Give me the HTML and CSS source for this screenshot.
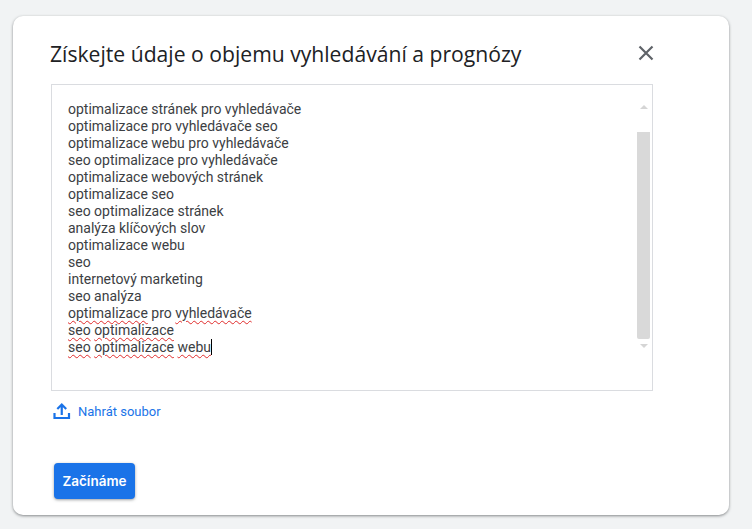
FILE: index.html
```html
<!DOCTYPE html>
<html lang="cs">
<head>
    <meta charset="UTF-8">
    <meta name="viewport" content="width=device-width, initial-scale=1.0">
    <title>Plánovač klíčových slov</title>
    <link rel="stylesheet" href="styles.css">
</head>
<body>
    <div class="dialog">
        <div class="dialog-header">
            <h1>Získejte údaje o objemu vyhledávání a prognózy</h1>
            <svg class="close-icon" width="16" height="16" viewBox="0 0 16 16">
                <path d="M1.5 1.500L14.500 14.500M14.500 1.500L1.500 14.500" stroke="#5f6368" stroke-width="2.200" fill="none"/>
            </svg>
        </div>
        <div class="keyword-box">
            <p>optimalizace stránek pro vyhledávače</p>
            <p>optimalizace pro vyhledávače seo</p>
            <p>optimalizace webu pro vyhledávače</p>
            <p>seo optimalizace pro vyhledávače</p>
            <p>optimalizace webových stránek</p>
            <p>optimalizace seo</p>
            <p>seo optimalizace stránek</p>
            <p>analýza klíčových slov</p>
            <p>optimalizace webu</p>
            <p>seo</p>
            <p>internetový marketing</p>
            <p>seo analýza</p>
            <p><span class="misspelled">optimalizace</span> pro <span class="misspelled">vyhledávače</span></p>
            <p><span class="misspelled">seo</span> <span class="misspelled">optimalizace</span></p>
            <p><span class="misspelled">seo</span> <span class="misspelled">optimalizace</span> <span class="misspelled caret">webu</span></p>
            <div class="scrollbar">
                <span class="arrow-up"></span>
                <span class="thumb"></span>
                <span class="arrow-down"></span>
            </div>
        </div>
        <div class="upload">
            <svg width="18" height="18" viewBox="0 0 18 18">
                <path d="M1.500 11v5h14.500v-5M8.750 13V2.500M4.300 7L8.750 2.500 13.200 7" stroke="#1a73e8" stroke-width="2.200" fill="none"/>
            </svg>
            <span>Nahrát soubor</span>
        </div>
        <button class="start-button">Začínáme</button>
    </div>
</body>
</html>
```

FILE: styles.css
```css
body {
    font-family: Roboto, Arial, sans-serif;
    margin: 0;
    padding: 16px 23px 14px 13px;
    background-color: #f1f3f4;
    color: #3c4043;
}
.dialog {
    height: 499px;
    box-sizing: border-box;
    padding: 23px 38px 16px 38px;
    background-color: #ffffff;
    border-radius: 10px;
    box-shadow: 0 1px 3px rgba(60, 64, 67, 0.6);
    display: flex;
    flex-direction: column;
    align-items: flex-start;
}
.dialog-header {
    width: 100%;
    display: flex;
    justify-content: space-between;
    align-items: flex-start;
    height: 45px;
}
.dialog-header h1 {
    margin: 0;
    margin-left: -1px;
    font-family: "Open Sans", Roboto, sans-serif;
    font-size: 21.15px;
    line-height: 30px;
    font-weight: 400;
    color: #202124;
}
.close-icon {
    margin-top: 6px;
    margin-right: 37px;
}
.keyword-box {
    position: relative;
    box-sizing: border-box;
    width: 602px;
    height: 307px;
    padding: 16px 16px;
    border: 1px solid #dadce0;
    font-size: 14px;
    line-height: 17px;
}
.keyword-box p {
    margin: 0;
}
.misspelled {
    text-decoration: underline wavy #e02b2b 1px;
    text-underline-offset: 2px;
}
.caret {
    border-right: 1px solid #000000;
}
.scrollbar {
    position: absolute;
    top: 20px;
    right: 2px;
    width: 13px;
    display: flex;
    flex-direction: column;
    align-items: center;
}
.arrow-up {
    border-left: 4px solid transparent;
    border-right: 4px solid transparent;
    border-bottom: 4px solid #d5d5d5;
}
.thumb {
    width: 13px;
    height: 207px;
    margin-top: 23px;
    margin-bottom: 5px;
    background-color: #d9d9d9;
    border-radius: 0 0 2px 2px;
}
.arrow-down {
    border-left: 4px solid transparent;
    border-right: 4px solid transparent;
    border-top: 4px solid #d5d5d5;
}
.upload {
    display: flex;
    align-items: center;
    gap: 7px;
    margin-top: 11px;
    margin-left: 2px;
    font-size: 13px;
    color: #1a73e8;
}
.start-button {
    margin-top: auto;
    margin-left: 3px;
    width: 81px;
    height: 36px;
    padding: 0;
    border: none;
    border-radius: 4px;
    background-color: #1a73e8;
    box-shadow: 0 1px 3px rgba(60, 64, 67, 0.5);
    color: #ffffff;
    font-family: Inter, Roboto, sans-serif;
    font-size: 13.5px;
    font-weight: 600;
}
```
